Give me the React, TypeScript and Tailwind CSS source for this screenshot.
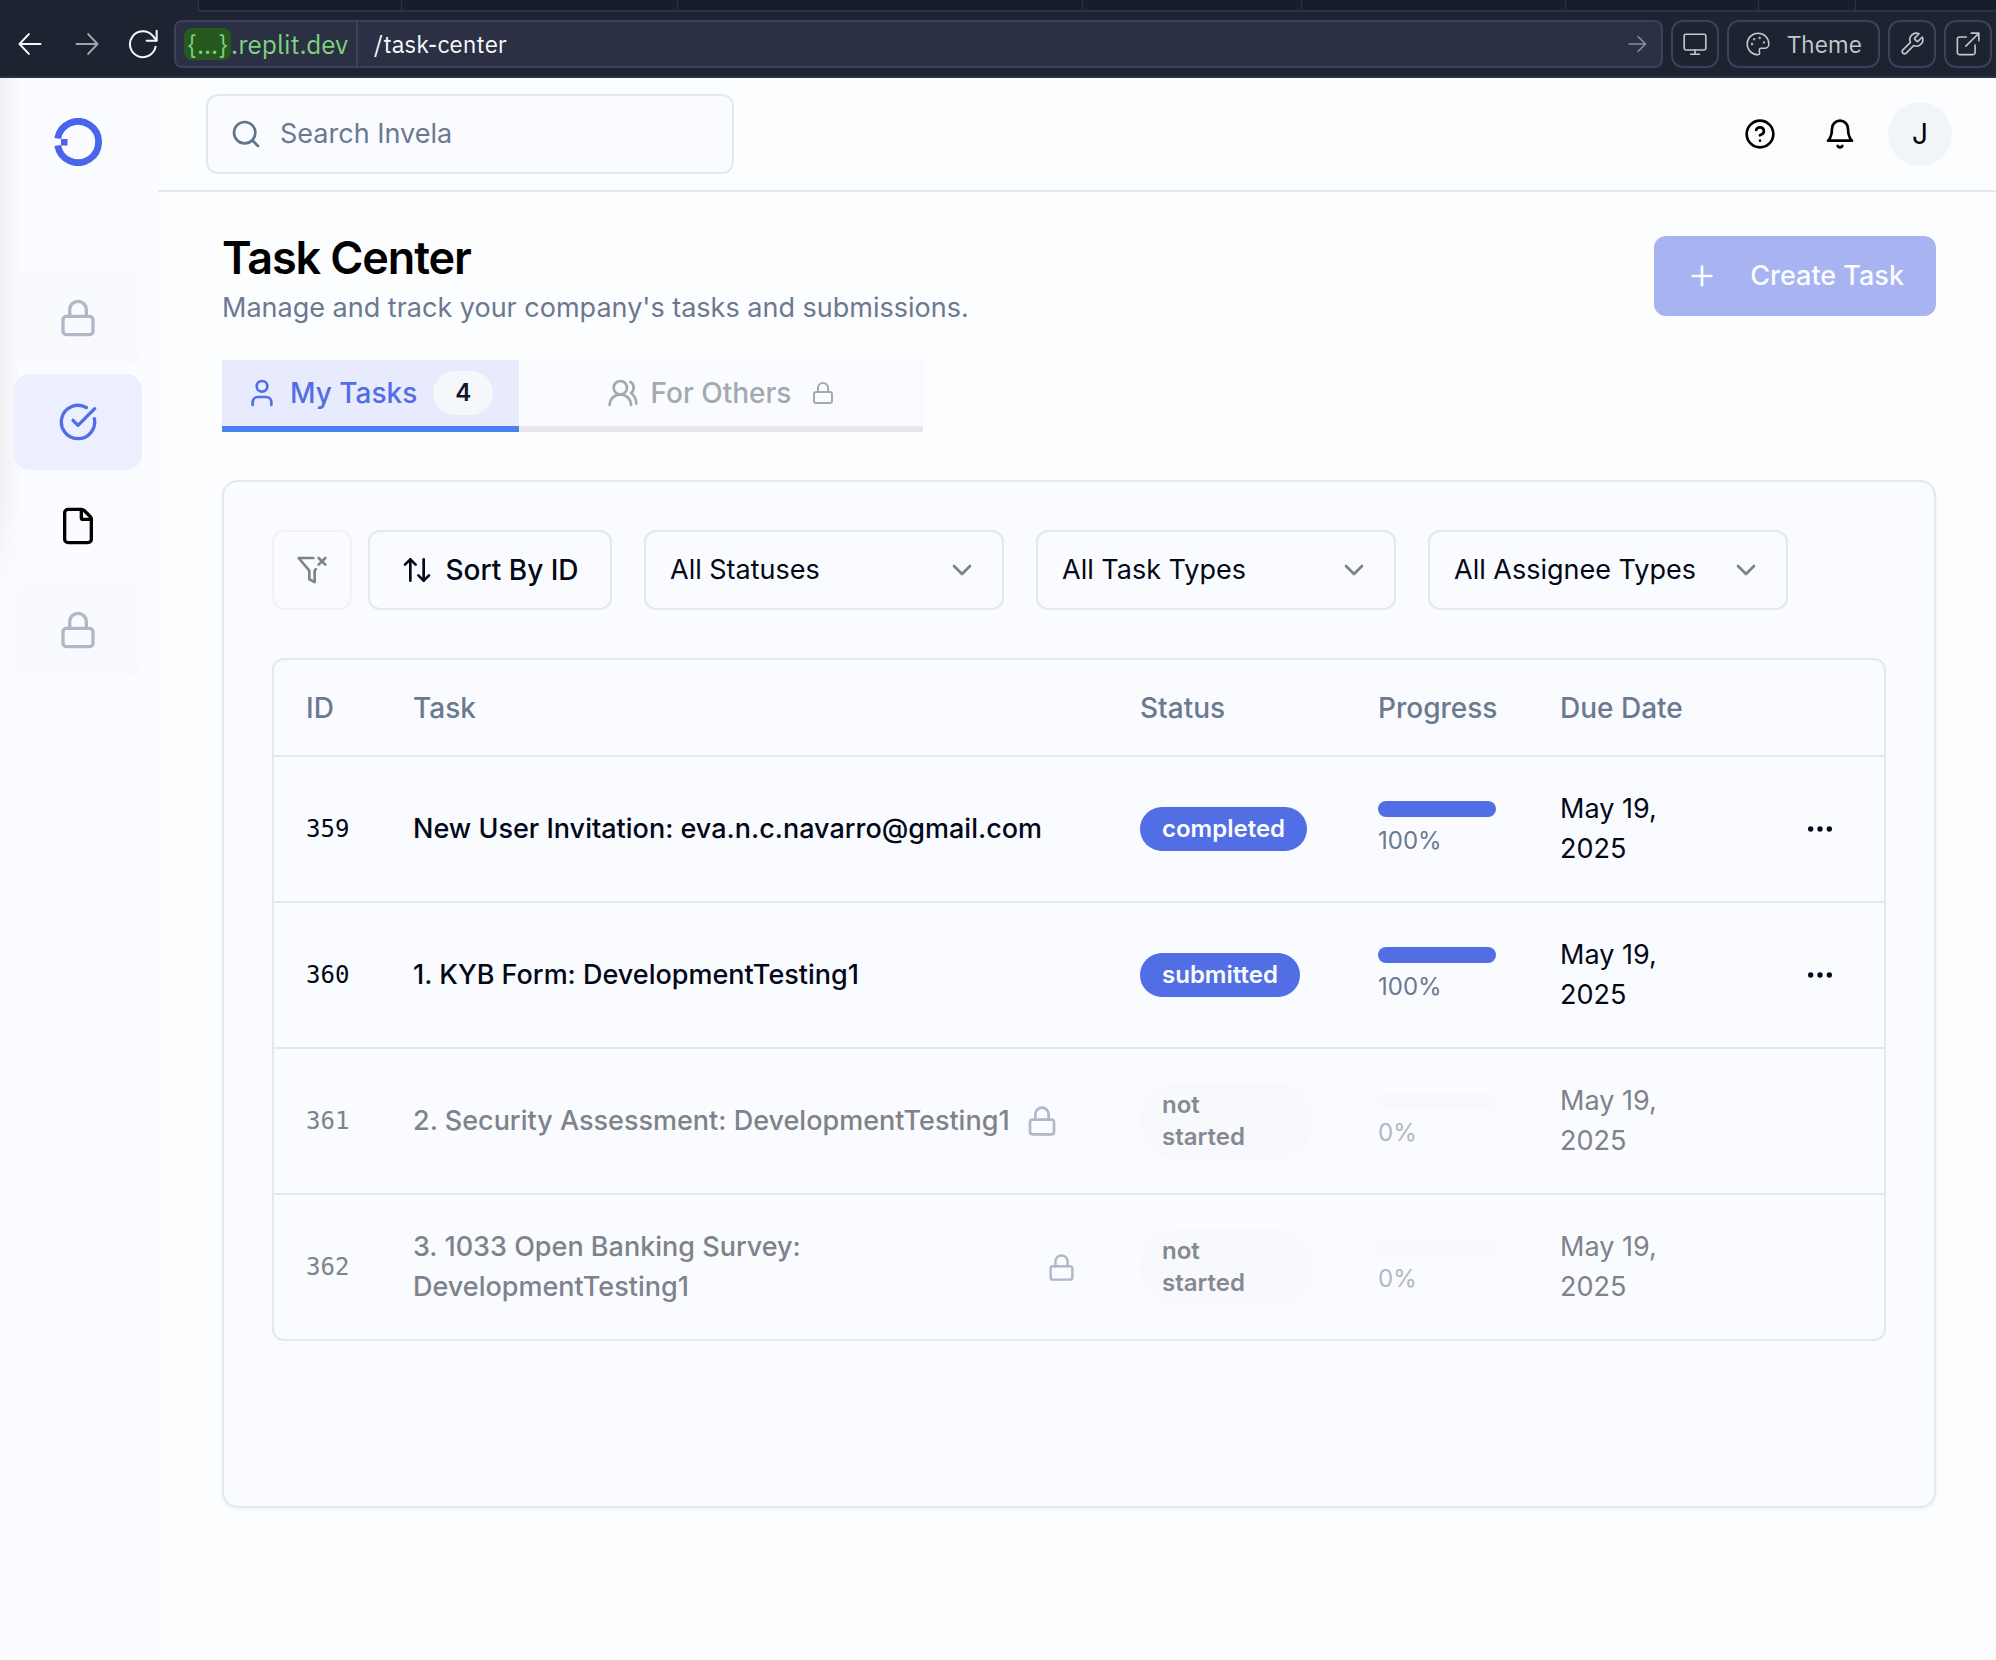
import React from "react";
import {
  ArrowUpDown,
  ChevronDown,
  CircleCheckBig,
  CircleQuestionMark,
  Ellipsis,
  File,
  Lock,
  Plus,
  Search,
  User,
  UsersRound,
} from "lucide-react";

type Task = {
  id: number;
  title: string;
  status: string;
  progress: number;
  due: string;
  locked: boolean;
  compactLock?: boolean;
};

const tasks: Task[] = [
  { id: 359, title: "New User Invitation: eva.n.c.navarro@gmail.com", status: "completed", progress: 100, due: "May 19, 2025", locked: false },
  { id: 360, title: "1. KYB Form: DevelopmentTesting1", status: "submitted", progress: 100, due: "May 19, 2025", locked: false },
  { id: 361, title: "2. Security Assessment: DevelopmentTesting1", status: "not started", progress: 0, due: "May 19, 2025", locked: true },
  { id: 362, title: "3. 1033 Open Banking Survey: DevelopmentTesting1", status: "not started", progress: 0, due: "May 19, 2025", locked: true, compactLock: true },
];

function Glyph({ size, stroke = 2, children }: { size: number; stroke?: number; children: React.ReactNode }) {
  return (
    <svg
      width={size}
      height={size}
      viewBox="0 0 24 24"
      fill="none"
      stroke="currentColor"
      strokeWidth={stroke}
      strokeLinecap="round"
      strokeLinejoin="round"
      className="shrink-0"
      aria-hidden="true"
    >
      {children}
    </svg>
  );
}

function TabStrip() {
  return (
    <div className="flex h-3 pl-[198px]">
      <div className="flex h-3 flex-1 border-b-2 border-l border-[#2c3245] bg-[#171d2a]">
        <div className="w-[203px] border-r border-[#2c3245]" />
        <div className="w-[276px] border-r border-[#2c3245]" />
        <div className="w-[405px] border-r border-[#2c3245]" />
        <div className="w-[219px] border-r border-[#2c3245]" />
        <div className="w-[264px] border-r border-[#2c3245]" />
        <div className="w-[193px] border-r border-[#2c3245]" />
        <div className="w-[97px] border-r border-[#2c3245]" />
      </div>
    </div>
  );
}

function BrowserBar() {
  const tool =
    "flex h-12 w-12 shrink-0 items-center justify-center rounded-xl border-2 border-[#3c4158] text-[#c2c8cc]";
  return (
    <div className="h-[78px] border-b-2 border-[#2b3044] bg-[#1e2332] font-['IBM_Plex_Sans','Noto_Sans',sans-serif]">
      <TabStrip />
      <div className="flex gap-2 pt-2 pr-1 pl-3">
        <nav className="flex w-[154px] shrink-0 items-center justify-between pr-1" aria-label="Browser">
          <button type="button" aria-label="Back" className="flex w-9 justify-center text-[#f5f9fc]">
            <Glyph size={28} stroke={1.7}>
              <path d="M21 12H3.5M11 3.5 3 12l8 8.500" />
            </Glyph>
          </button>
          <button type="button" aria-label="Forward" className="flex w-9 justify-center text-[#a2a4ac]">
            <Glyph size={28} stroke={1.7}>
              <path d="M3 12h17.500M13 3.5l8 8.500-8 8.500" />
            </Glyph>
          </button>
          <button type="button" aria-label="Reload" className="flex w-9 justify-center text-[#f5f9fc]">
            <Glyph size={32} stroke={1.5}>
              <path d="M21.500 2v7.500H14" />
              <path d="M21.300 9.300 18.500 5.800A9.700 9.700 0 1 0 20.700 14" />
            </Glyph>
          </button>
        </nav>
        <div className="flex h-12 min-w-0 flex-1 items-center rounded-lg border-2 border-[#3c4158] bg-[#2b3044] text-[26px] leading-8">
          <span className="flex h-full items-center border-r-2 border-[#3c4158] px-2 text-[#7fd27f]">
            <span className="rounded-lg bg-[#27591f] px-1">{"{...}"}</span>
            <span>.replit.dev</span>
          </span>
          <input
            type="text"
            aria-label="Path"
            defaultValue="/task-center"
            className="min-w-0 flex-1 bg-transparent px-4 text-2xl leading-8 text-[#f5f9fc] outline-none"
          />
          <button type="button" aria-label="Go" className="mr-3 text-[#8b8f9b]">
            <Glyph size={24} stroke={1.6}>
              <path d="M4 12h16M13 4.500l7.500 7.500-7.500 7.500" />
            </Glyph>
          </button>
        </div>
        <button type="button" aria-label="Devices" className={tool}>
          <Glyph size={26} stroke={1.5}>
            <rect x="2" y="3" width="20" height="14.500" rx="1.500" />
            <path d="M12 17.500V21M8 21.500h8" />
          </Glyph>
        </button>
        <button
          type="button"
          className="flex h-12 shrink-0 items-center gap-4 rounded-xl border-2 border-[#3c4158] px-4 text-2xl leading-8 text-[#c2c8cc]"
        >
          <Glyph size={26} stroke={1.4}>
            <path d="M12 2C6.500 2 2 6.500 2 12s4.500 10 10 10c1 0 1.600-.700 1.600-1.600 0-.5-.2-.9-.4-1.300V17.500c0-.9.700-1.500 1.600-1.500h3.300c2.200 0 3.900-1.800 3.900-4C22 6.300 17.500 2 12 2z" />
            <circle cx="6.500" cy="12" r=".4" />
            <circle cx="8.500" cy="7.500" r=".4" />
            <circle cx="13.500" cy="6.500" r=".4" />
            <circle cx="17.500" cy="10.500" r=".4" />
          </Glyph>
          Theme
        </button>
        <button type="button" aria-label="Developer tools" className={tool}>
          <Glyph size={26} stroke={1.5}>
            <path d="M14.700 6.300a1 1 0 0 0 0 1.400l1.600 1.600a1 1 0 0 0 1.400 0l3.770-3.770a6 6 0 0 1-7.940 7.940l-6.910 6.910a2.120 2.120 0 0 1-3-3l6.910-6.910a6 6 0 0 1 7.940-7.940l-3.760 3.760z" />
          </Glyph>
        </button>
        <button type="button" aria-label="Open in new tab" className={tool}>
          <Glyph size={26} stroke={1.5}>
            <path d="M15 2h7v7M10 14 21.500 2.500M18.500 13v7a1.800 1.800 0 0 1-1.800 1.800H4A1.800 1.800 0 0 1 2.200 20V7.500A1.800 1.800 0 0 1 4 5.500h6.500" />
          </Glyph>
        </button>
      </div>
    </div>
  );
}

function Sidebar() {
  const item = "flex h-24 items-center justify-center rounded-2xl";
  return (
    <aside className="relative w-[158px] shrink-0 bg-[#fbfcff] pt-10 pr-4 pl-[14px]">
      <div className="pointer-events-none absolute top-0 left-0 h-[512px] w-5 bg-linear-to-r from-[#eeeff2] to-transparent mask-b-from-80%" />
      <a href="#home" aria-label="Invela" className="relative mx-auto block h-12 w-12">
        <svg viewBox="0 0 48 48" width="48" height="48" aria-hidden="true">
          <path d="M3.700 20.500A20.600 20.600 0 1 1 3.700 27.500" fill="none" stroke="#4965ec" strokeWidth="6.800" />
          <rect x="7" y="21" width="6.500" height="6.500" fill="#4965ec" />
        </svg>
      </a>
      <nav className="relative mt-[104px] flex flex-col gap-2" aria-label="Main">
        <button type="button" aria-label="Dashboard, locked" className={item + " bg-[#f8fafd] text-[#afb8c7]"}>
          <Lock size={40} />
        </button>
        <a href="#tasks" aria-label="Task Center" className={item + " bg-[#ebefff] text-[#526ee4]"}>
          <CircleCheckBig size={40} />
        </a>
        <a href="#files" aria-label="File Vault" className={item + " text-black"}>
          <File size={40} />
        </a>
        <button type="button" aria-label="Insights, locked" className={item + " bg-[#f8fafd] text-[#afb8c7]"}>
          <Lock size={40} />
        </button>
      </nav>
    </aside>
  );
}

function TopBar() {
  return (
    <header className="flex h-[114px] items-center justify-between border-b-2 border-[#e2e8f0] pr-9 pl-12">
      <label className="flex h-20 w-[528px] items-center gap-[18px] rounded-xl border-2 border-[#e2e8f0] bg-[#fafbff] px-[22px] text-[#64748b]">
        <Search size={32} className="shrink-0" />
        <input
          type="text"
          aria-label="Search"
          placeholder="Search Invela"
          className="min-w-0 flex-1 bg-transparent text-[27px] leading-10 outline-none placeholder:text-[#6b7990]"
        />
      </label>
      <div className="flex items-center text-black">
        <button type="button" aria-label="Help" className="flex h-20 w-20 items-center justify-center">
          <CircleQuestionMark size={32} />
        </button>
        <button type="button" aria-label="Notifications" className="flex h-20 w-20 items-center justify-center">
          <Glyph size={32}>
            <path d="M6 8a6 6 0 0 1 12 0c0 7 3 9 3 9H3s3-2 3-9" />
            <path d="M10.300 21a1.940 1.940 0 0 0 3.400 0" />
          </Glyph>
        </button>
        <button type="button" aria-label="Account" className="flex h-20 w-20 items-center justify-center">
          <span className="flex h-16 w-16 items-center justify-center rounded-full bg-[#f1f5f9] text-[28px] leading-10">J</span>
        </button>
      </div>
    </header>
  );
}

function FilterSelect({ label }: { label: string }) {
  return (
    <div className="relative w-[360px]">
      <select
        aria-label={label}
        className="h-20 w-full appearance-none rounded-xl border-2 border-[#e2e8f0] bg-[#fafbff] px-6 text-[27px] leading-10 text-[#020817] outline-none"
      >
        <option>{label}</option>
      </select>
      <ChevronDown size={32} className="pointer-events-none absolute top-6 right-[26px] text-[#7e828c]" />
    </div>
  );
}

function TaskRow({ task }: { task: Task }) {
  const tone = task.locked ? " text-[#7e828c]" : " text-[#020817]";
  return (
    <tr className="border-b-2 border-[#e2e8f0] last:border-b-0">
      <td className={"px-8 py-8 font-['DejaVu_Sans_Mono',monospace] text-2xl" + tone}>{task.id}</td>
      <td className={"px-8 py-8 text-[27px] leading-10 font-medium" + tone}>
        <div className="flex items-center gap-4">
          <span>{task.title}</span>
          {task.locked && <Lock size={task.compactLock ? 29 : 32} className="shrink-0 text-[#afb8c7]" />}
        </div>
      </td>
      <td className="px-8">
        <span
          className={
            "inline-block rounded-[38px] py-[6px] pl-[22px] align-middle text-2xl leading-8 font-semibold " +
            (task.locked ? "w-full bg-[#f8f9fc] pr-12 text-[#858993]" : "bg-[#526ee4] pr-[22px] text-[#fbfcff]")
          }
        >
          {task.status}
        </span>
      </td>
      <td className="px-8">
        <div className={"h-4 overflow-hidden rounded-full " + (task.locked ? "bg-[#f8f9fc]" : "bg-[#f1f5f9]")}>
          <div className="h-full bg-[#526ee4]" style={{ width: `${task.progress}%` }} />
        </div>
        <div className={"mt-2 text-2xl leading-8 " + (task.locked ? "text-[#afb8c7]" : "text-[#6b7990]")}>{task.progress}%</div>
      </td>
      <td className={"px-8 py-8 text-[27px] leading-10" + tone}>
        <div className="w-[120px]">{task.due}</div>
      </td>
      <td className="px-8">
        {!task.locked && (
          <button type="button" aria-label={`Actions for task ${task.id}`} className="flex h-16 w-16 items-center justify-center text-[#020817]">
            <Ellipsis size={32} />
          </button>
        )}
      </td>
    </tr>
  );
}

export default function App() {
  return (
    <div className="flex min-h-screen flex-col bg-[#fcfdff] font-['Inter',sans-serif] text-[28px] leading-10 text-[#020817]">
      <BrowserBar />
      <div className="flex flex-1">
        <Sidebar />
        <div className="min-w-0 flex-1">
          <TopBar />
          <main className="pt-11 pr-[60px] pl-16">
            <div className="flex items-start justify-between">
              <div>
                <h1 className="text-[45px] leading-[44px] font-semibold tracking-tight text-black">Task Center</h1>
                <p className="mt-2 text-[27px] leading-10 text-[#6b7990]">
                  Manage and track your company's tasks and submissions.
                </p>
              </div>
              <button
                type="button"
                disabled
                className="flex h-20 items-center gap-8 rounded-xl bg-[#a7b4f1] px-8 text-[27px] leading-10 font-medium text-[#fbfcff]"
              >
                <Plus size={32} />
                Create Task
              </button>
            </div>

            <div className="mt-8 flex font-medium" role="tablist">
              <button
                type="button"
                role="tab"
                aria-selected="true"
                className="flex h-[72px] w-[297px] items-center gap-3 border-b-[6px] border-[#4c7ff0] bg-[#e8ebfd] pl-6 text-[#526ee4]"
              >
                <User size={32} />
                My Tasks
                <span className="ml-1 flex h-11 w-[60px] items-center justify-center rounded-full bg-[#f5f7fb] text-2xl font-semibold text-[#0f172a]">
                  4
                </span>
              </button>
              <button
                type="button"
                role="tab"
                aria-selected="false"
                disabled
                className="flex h-[72px] w-[404px] items-center justify-center gap-3 border-b-[6px] border-[#e5e7ea] bg-[#fafbff] text-[#a3a8b1]"
              >
                <UsersRound size={32} />
                For Others
                <Lock size={24} className="ml-2" />
              </button>
            </div>

            <section className="mt-12 min-h-[1028px] rounded-2xl border-2 border-[#e2e8f0] bg-[#fafbff] p-12 shadow-[0_2px_4px_rgba(0,0,0,0.05)]">
              <div className="flex gap-8">
                <div className="flex gap-4">
                  <button
                    type="button"
                    disabled
                    aria-label="Clear filters"
                    className="flex h-20 w-20 items-center justify-center rounded-xl border-2 border-[#f0f2f8] text-[#7e828c]"
                  >
                    <Glyph size={32}>
                      <path d="M13.013 3H2l8 9.460V19l4 2v-8.540l.9-1.055" />
                      <path d="m22 3-5 5M17 3l5 5" />
                    </Glyph>
                  </button>
                  <button
                    type="button"
                    className="flex h-20 w-[244px] items-center justify-center gap-3 rounded-xl border-2 border-[#e2e8f0] font-medium"
                  >
                    <ArrowUpDown size={32} />
                    Sort By ID
                  </button>
                </div>
                <FilterSelect label="All Statuses" />
                <FilterSelect label="All Task Types" />
                <FilterSelect label="All Assignee Types" />
              </div>

              <div className="mt-12 rounded-xl border-2 border-[#e2e8f0]">
                <table className="w-full table-fixed text-left">
                  <colgroup>
                    <col className="w-[107px]" />
                    <col />
                    <col className="w-[238px]" />
                    <col className="w-[182px]" />
                    <col className="w-[228px]" />
                    <col className="w-[128px]" />
                  </colgroup>
                  <thead>
                    <tr className="h-24 border-b-2 border-[#e2e8f0] text-[#6b7990]">
                      <th scope="col" className="px-8 font-medium">ID</th>
                      <th scope="col" className="px-8 font-medium">Task</th>
                      <th scope="col" className="px-8 font-medium">Status</th>
                      <th scope="col" className="px-8 font-medium">Progress</th>
                      <th scope="col" className="px-8 font-medium">Due Date</th>
                      <th scope="col" aria-label="Actions" />
                    </tr>
                  </thead>
                  <tbody>
                    {tasks.map((task) => (
                      <TaskRow key={task.id} task={task} />
                    ))}
                  </tbody>
                </table>
              </div>
            </section>
          </main>
        </div>
      </div>
    </div>
  );
}
